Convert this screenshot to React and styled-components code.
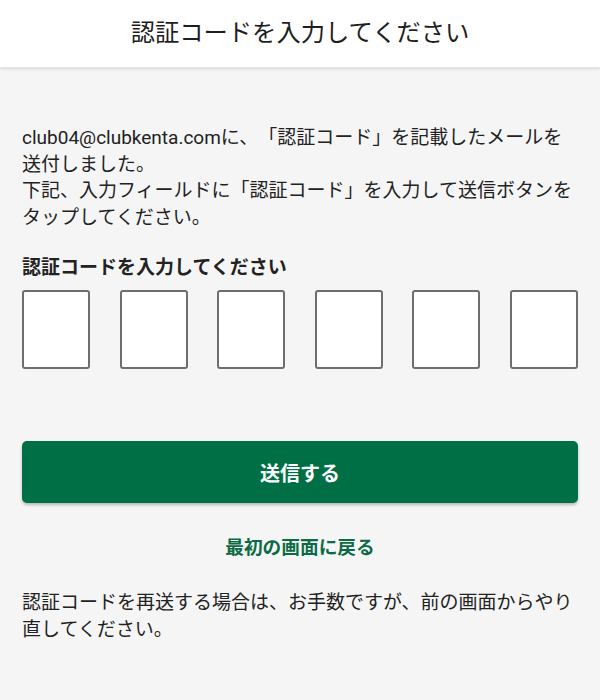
import React from "react";
import styled, { createGlobalStyle } from "styled-components";

const Global = createGlobalStyle`
  html, body {
    margin: 0;
    padding: 0;
    background: #f5f5f5;
  }
  body {
    font-family: Roboto, "Noto Sans CJK JP", "Noto Sans", sans-serif;
    color: #222;
    text-spacing-trim: space-all;
  }
`;

const Page = styled.div`
  min-height: 700px;
  background: #f5f5f5;
`;

const Header = styled.header`
  height: 67px;
  background: #fff;
  display: flex;
  align-items: center;
  justify-content: center;
  box-shadow: 0 1px 3px rgba(0, 0, 0, 0.12);
  border-bottom: 1px solid #e4e4e4;
`;

const Title = styled.h1`
  margin: 0;
  font-size: 24.3px;
  font-weight: 400;
  color: #1e1e1e;
  line-height: 1;
`;

const Content = styled.main`
  padding: 57px 22px 0;
`;

const Text = styled.p`
  margin: ${(p) => p.$mt || 0}px 0 0;
  font-size: 19px;
  line-height: 26.6px;
  color: #222;
  text-spacing-trim: space-all;
`;

const Label = styled.div`
  margin-top: 24px;
  font-size: 19px;
  font-weight: 700;
  line-height: 26px;
  color: #222;
`;

const Boxes = styled.div`
  margin-top: 9px;
  display: flex;
  justify-content: space-between;
`;

const CodeBox = styled.input`
  box-sizing: border-box;
  width: 68px;
  height: 79px;
  border: 2px solid #6e6e6e;
  border-radius: 3px;
  background: #fff;
  padding: 0;
  text-align: center;
  font-size: 28px;
  font-family: Roboto, sans-serif;
  outline: none;
`;

const SubmitButton = styled.button`
  margin-top: 72px;
  width: 100%;
  height: 62px;
  border: none;
  border-radius: 5px;
  background: #006f45;
  color: #fff;
  font-family: Roboto, "Noto Sans CJK JP", sans-serif;
  font-size: 20px;
  font-weight: 700;
  box-shadow: 0 2px 3px rgba(0, 0, 0, 0.25);
  display: block;
  cursor: pointer;
`;

const BackLink = styled.a`
  display: block;
  margin-top: 32px;
  text-align: center;
  font-size: 18.7px;
  font-weight: 700;
  line-height: 26px;
  color: #0c6a44;
  text-decoration: none;
`;

export default function App() {
  return (
    <Page>
      <Global />
      <Header>
        <Title>認証コードを入力してください</Title>
      </Header>
      <Content>
        <Text>
          club04@clubkenta.comに、「認証コード」を記載したメールを送付しました。
          <br />
          下記、入力フィールドに「認証コード」を入力して送信ボタンをタップしてください。
        </Text>
        <Label>認証コードを入力してください</Label>
        <Boxes>
          {[0, 1, 2, 3, 4, 5].map((i) => (
            <CodeBox key={i} maxLength={1} inputMode="numeric" aria-label={`code ${i + 1}`} />
          ))}
        </Boxes>
        <SubmitButton>送信する</SubmitButton>
        <BackLink href="#">最初の画面に戻る</BackLink>
        <Text $mt={29}>
          認証コードを再送する場合は、お手数ですが、前の画面からやり直してください。
        </Text>
      </Content>
    </Page>
  );
}
